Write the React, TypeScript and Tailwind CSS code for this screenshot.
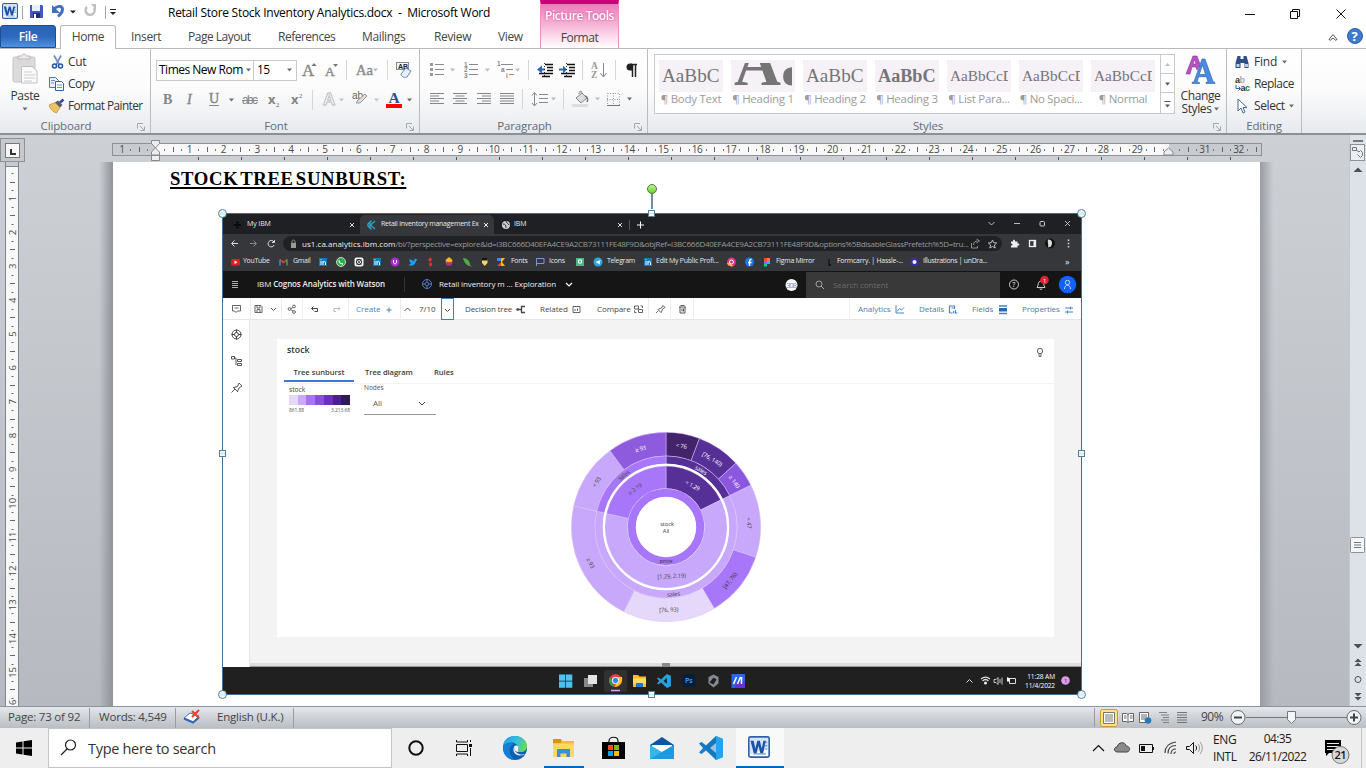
import React from "react";
import type { ReactNode } from "react";

const UI = "font-['Open_Sans','Noto_Sans',sans-serif]";

function Ic({ w, h = 20, children }: { w: number; h?: number; children?: ReactNode }) {
  return (
    <svg width={w} height={h} fill="none" className="shrink-0 overflow-visible">
      {children}
    </svg>
  );
}

function Drop({ x, y = 10, c = "#6b6b6b" }: { x: number; y?: number; c?: string }) {
  return <path d={`M${x} ${y - 1.5}h5l-2.500 3z`} fill={c} />;
}

function Sep({ x, h = 20 }: { x: number; h?: number }) {
  return <path d={`M${x + 0.5} 0V${h}`} stroke="#d3d6da" />;
}

function WordLogo({ size = 16 }: { size?: number }) {
  return (
    <svg width={size} height={size} viewBox="0 0 16 16" className="shrink-0">
      <rect x="0.6" y="0.6" width="14.8" height="14.8" rx="1.2" fill="#fff" stroke="#2f5ea8" strokeWidth="1.2" />
      <path d="M1.500 1.500h13v8l-13 4z" fill="#d5e4f7" />
      <path d="M12.500 4.500H14M12.500 7H14M12.500 9.500H14M4 13H13" stroke="#6d95cf" strokeWidth="0.8" />
      <path d="M1.800 3.500 4.200 12.500H6.200L7.600 7 9 12.500H11L13 3.500H11.200L10 9 8.600 3.500H6.800L5.300 9 4.100 3.500z" fill="#1d51a5" />
    </svg>
  );
}

function VsCode({ size }: { size: number }) {
  return (
    <svg width={size} height={size} viewBox="0 0 24 24" className="shrink-0">
      <path d="M17 0 24 3V21L17 24 7 14.500 2.500 18 0 16.500 4 12 0 7.500 2.500 6 7 9.500z" fill="#1780cf" />
      <path d="M17 0 24 3V21L17 24z" fill="#26a3f0" />
      <path d="M17 7v10L11 12z" fill="#eee" />
      <path d="M17 0 7 9.500 2.500 6 0 7.500 15 20.500 17 24" fill="#0c69ad" opacity="0.35" />
    </svg>
  );
}

function Handle({ className, round }: { className: string; round?: boolean }) {
  return (
    <i
      className={
        "absolute block border border-[#5b7c94] bg-gradient-to-b from-white via-[#c9eef5] to-white " +
        (round ? "size-[9px] rounded-full " : "size-[7px] ") +
        className
      }
    />
  );
}

function TitleArea() {
  return (
    <div className="flex h-12 shrink-0 bg-white">
      <div className="flex w-[540px] shrink-0 flex-col">
        <div className="flex h-6 items-center pl-0.5">
          <div className="flex w-[18px] pb-0.5"><WordLogo /></div>
          <Ic w={148} h={22}>
            <path d="M2.500 5v13M85.500 5v13" stroke="#a7a7a7" />
            <path d="M10 4h12l1 1v12H10z" fill="#4059bd" />
            <path d="M12 4h8v6h-8z" fill="#e9eefb" />
            <path d="M13 12h7v5h-7z" fill="#252f63" />
            <path d="M14 13h2v4h-2z" fill="#fff" />
            <path d="M34.500 7.500C38 4 43 5 42.500 9c-.3 2.500-2 4.500-4.500 6.500" stroke="#3f6fc4" strokeWidth="2.800" />
            <path d="M32 4v8h8z" fill="#3f6fc4" />
            <path d="M50 9.500h6l-3 3z" fill="#222" />
            <path d="M74 7a4.500 4.500 0 1 1-7-1" stroke="#bfbfbf" strokeWidth="2.500" />
            <path d="M71 3h5v6z" fill="#bfbfbf" />
            <path d="M90 8.500h6" stroke="#222" /><path d="M90 11h6l-3 3z" fill="#222" />
          </Ic>
          <span className="whitespace-pre pt-px text-[12px] tracking-[-0.27px] text-black">
            {"Retail Store Stock Inventory Analytics.docx  -  Microsoft Word"}
          </span>
        </div>
        <div className="flex h-6 items-center text-[12px] tracking-[-0.35px] text-[#444]">
          <div className="mt-px flex h-[23px] w-14 items-center justify-center rounded-t-[3px] border border-[#1b4f9c] bg-gradient-to-b from-[#2b63b5] via-[#2e68bd] to-[#4f93e0] font-semibold text-white">File</div>
          <div className="z-10 ml-1 mt-px flex h-6 w-14 items-center justify-center rounded-t-[3px] border border-b-0 border-[#b6babf] bg-white">Home</div>
          <div className="flex pt-0.5">
            <span className="ml-[15px] w-[57px]">Insert</span>
            <span className="w-[90px] tracking-[-0.5px]">Page Layout</span>
            <span className="w-[84px] tracking-[-0.5px]">References</span>
            <span className="w-[72px]">Mailings</span>
            <span className="w-16">Review</span>
            <span>View</span>
          </div>
        </div>
      </div>
      <div className="flex w-[79px] shrink-0 flex-col items-center border-x border-t-4 border-x-[#ee8fc4] border-t-[#c9007a] bg-gradient-to-b from-[#ec7ab9] via-[#f6b8d9] to-white text-[12px] tracking-[-0.45px]">
        <span className="mt-[3px] whitespace-nowrap font-semibold leading-[17px] text-white [text-shadow:0_0_2px_#c22a80]">Picture Tools</span>
        <span className="mt-[5px] leading-[17px] text-[#444]">Format</span>
      </div>
      <div className="flex flex-1 flex-col items-end">
        <Ic w={121} h={28}>
          <path d="M0 14.500h10M45.500 11.500h7v7h-7zM47.500 11.500v-2h7v7h-2M91.500 9.500l9 9M100.500 9.500l-9 9" stroke="#111" />
        </Ic>
        <Ic w={41} h={20}>
          <path d="M4 11.500 8 6.500l4 5-1.500.7L8 10l-2.500 2.200z" stroke="#555" fill="#fff" />
          <circle cx="30" cy="8" r="7.500" fill="#3d7bd1" stroke="#2a5fae" />
          <text x="26.500" y="13" fontSize="13" fontWeight="700" fill="#fff" fontFamily="Open Sans">?</text>
        </Ic>
      </div>
    </div>
  );
}

function Group({ label, className, launcher, children }: { label: string; className: string; launcher?: boolean; children: ReactNode }) {
  return (
    <div className={"flex shrink-0 flex-col border-r border-[#b9bdc2] " + className}>
      <div className="flex h-[69px] flex-col">{children}</div>
      <div className="flex h-4 items-center">
        <span className={"flex-1 pt-0.5 text-center text-[11.500px] tracking-[-0.15px] text-[#616c78] " + (launcher ? "pr-1" : "")}>{label}</span>
        {launcher && (
          <Ic w={14} h={16}>
            <path d="M1.500 11.500V6.500H7M4 9l4 4M8.500 9.500v4H4.500" stroke="#a3a7ad" />
          </Ic>
        )}
      </div>
    </div>
  );
}

function ClipboardGroup() {
  return (
    <Group label="Clipboard" launcher className="w-[151px]">
      <div className="flex flex-1 text-[12px] tracking-[-0.3px] text-[#333]">
        <div className="flex w-[50px] flex-col items-center pt-1">
          <Ic w={28} h={32}>
            <rect x="2" y="4" width="22" height="25" rx="2" fill="#dcdadb" stroke="#c6c4c5" />
            <path d="M7 6V3h4c0-2.500 4-2.500 4 0h4v3z" fill="#eee" stroke="#b8b6b7" />
            <path d="M10.500 13.500H21l5 4.500v12H10.500z" fill="#fafafa" stroke="#c0c0c0" />
            <path d="M13 19h8M13 22h11M13 25h11M13 28h8" stroke="#ccc" />
          </Ic>
          <span className="mt-[3px] leading-[16px]">Paste</span>
          <Ic w={28} h={10}><Drop x={11.5} y={5} /></Ic>
        </div>
        <div className="flex flex-col pl-px pt-0.5">
          <div className="flex h-[22px] items-center">
            <Ic w={17} h={16}>
              <path d="M3 1.500 8.500 11M10 1.500 5 11" stroke="#6d8fc0" strokeWidth="1.700" />
              <circle cx="3.500" cy="12" r="2" stroke="#2456a8" strokeWidth="1.600" />
              <circle cx="9.500" cy="12" r="2" stroke="#2456a8" strokeWidth="1.600" />
            </Ic>
            <span>Cut</span>
          </div>
          <div className="flex h-[22px] items-center">
            <Ic w={17} h={16}>
              <path d="M-1.500 1.500h6l3 3v7h-9z" fill="#eaf1fb" stroke="#4a74b8" />
              <path d="M4.500 5.500h6l2 2v7h-8z" fill="#fff" stroke="#34609f" />
              <path d="M0 4.500h4M0 7h3M6 9h5M6 11.500h5" stroke="#6d92cc" />
            </Ic>
            <span className="tracking-[-0.45px]">Copy</span>
          </div>
          <div className="flex h-[22px] items-center">
            <Ic w={17} h={16}>
              <path d="M-2 7 4 4.500 9 9.500 5.500 15C2 14-1 11-2 7z" fill="#eec463" stroke="#b98c3e" strokeWidth="0.700" />
              <path d="M4 4.500 7 2.500 11.500 7 9 9.500z" fill="#575c66" />
              <path d="M9 4.500 12.500 1.500" stroke="#3c3f99" strokeWidth="2.500" />
            </Ic>
            <span className="whitespace-nowrap text-[11.800px] tracking-[-0.55px]">Format Painter</span>
          </div>
        </div>
      </div>
    </Group>
  );
}

function FontGroup() {
  return (
    <Group label="Font" launcher className="w-[269px]">
      <div className="ml-[5px] mt-[11px] flex h-5 items-center">
        <div className="flex h-[21px] w-[98px] items-center border border-[#c6cacf] bg-white pl-0.5 text-[12px] tracking-[-0.5px] text-black">
          <span className="w-[86px] whitespace-nowrap">Times New Rom</span>
          <Ic w={8} h={20}><Drop x={1} /></Ic>
        </div>
        <div className="flex h-[21px] w-[43px] items-center border border-l-0 border-[#c6cacf] bg-white pl-[3px] text-[12px] tracking-[-0.5px] text-black">
          <span className="w-[28px]">15</span>
          <Ic w={8} h={20}><Drop x={2} /></Ic>
        </div>
        <Ic w={120}>
          <g fontFamily="Liberation Serif" fill="#8a8a8a" stroke="#8a8a8a" strokeWidth="0.400">
            <text x="5" y="16" fontSize="17">A</text>
            <text x="28" y="16" fontSize="13.500">A</text>
            <text x="59" y="15" fontSize="14.500">Aa</text>
          </g>
          <path d="M14.500 6h5l-2.500-3z" fill="#777" />
          <path d="M36 4h5l-2.500 3z" fill="#777" />
          <Sep x={49} />
          <Drop x={76} c="#b9b9b9" />
          <Sep x={90} />
          <rect x="99.500" y="2.500" width="12" height="7" fill="#f3f6fa" stroke="#7d8ca3" />
          <text x="101" y="9" fontSize="7" fontWeight="700" fill="#222" fontFamily="Liberation Sans">AB</text>
          <path d="M104 14l5-6 5 3-4 6c-2 1-6 0-6-3z" fill="#e9effa" stroke="#6c87b8" />
        </Ic>
      </div>
      <div className="ml-3 mt-2.5 flex h-5">
        <Ic w={250}>
          <g fontFamily="Liberation Serif" fontSize="14" fontWeight="700" fill="#858585">
            <text x="0" y="13.500">B</text>
            <text x="24" y="13.500" fontStyle="italic" fontWeight="400" stroke="#858585" strokeWidth="0.400">I</text>
            <text x="46" y="13" fontWeight="400" stroke="#858585" strokeWidth="0.400">U</text>
            <text x="79" y="13.500" fontSize="12" fontWeight="400" fontFamily="Liberation Sans" textLength="16">abc</text>
            <text x="105" y="13.500" fontFamily="Open Sans" fontSize="13">x</text>
            <text x="128" y="13.500" fontFamily="Open Sans" fontSize="13">x</text>
            <text x="113" y="17" fontSize="6.500">2</text>
            <text x="136" y="8" fontSize="6.500">2</text>
          </g>
          <path d="M46 15.500h10M79 10.500h16" stroke="#858585" />
          <Drop x={66} />
          <Sep x={149} />
          <text x="160" y="15" fontSize="17" fontWeight="700" fontFamily="Liberation Sans" fill="#fff" stroke="#bdbdbd">A</text>
          <Drop x={176} c="#c4c4c4" />
          <text x="189" y="9" fontSize="10" fontFamily="Liberation Sans" fill="#666">ab</text>
          <path d="M193 13h4l7-7-2-2-7 6z" fill="#ddd" stroke="#999" />
          <Drop x={211} c="#c4c4c4" />
          <text x="225.500" y="13" fontSize="15.500" fontWeight="700" fontFamily="Liberation Serif" fill="#31508c">A</text>
          <path d="M223 14h16v4h-16z" fill="#f00" />
          <Drop x={244} />
        </Ic>
      </div>
    </Group>
  );
}

function Lines({ x, color = "#858585", ws = [14, 9, 14, 9, 14], align = "l" }: { x: number; color?: string; ws?: number[]; align?: string }) {
  return (
    <path
      stroke={color}
      d={ws
        .map((w, i) => {
          const off = align === "l" ? 0 : align === "c" ? (14 - w) / 2 : 14 - w;
          return `M${x + off} ${4.5 + i * 2.5}h${w}`;
        })
        .join("")}
    />
  );
}

function ParagraphGroup() {
  return (
    <Group label="Paragraph" launcher className="w-[228px]">
      <div className="ml-2.5 mt-[11px] flex h-5">
        <Ic w={215}>
          <path d="M5 4.500h9M5 9.500h9M5 14.500h9M39 4.500h9M39 9.500h9M39 14.500h9M71 4.500h12M76 9.500h7M79 14.500h5" stroke="#8a8a8a" />
          <path d="M0 3h3v3H0zM0 8h3v3H0zM0 13h3v3H0z" fill="#999" />
          <g fontSize="6.500" fontFamily="Liberation Sans" fontWeight="700" fill="#888">
            <text x="34" y="7">1</text><text x="34" y="12">2</text><text x="34" y="17.500">3</text>
            <text x="67" y="6">1</text><text x="71" y="12">a</text><text x="76" y="18">i</text>
          </g>
          <Drop x={20} c="#bbb" /><Drop x={55} c="#bbb" /><Drop x={85} c="#bbb" />
          <Sep x={98} />
          <path d="M115 4.500h8M117 7.500h6M117 10.500h6M109 13.500h14M112 16.500h8" stroke="#111" strokeWidth="1.500" />
          <path d="M107 9.500l5-4v3h3v2h-3v3z" fill="#2e63c4" />
          <path d="M137 4.500h8M139 7.500h6M139 10.500h6M131 13.500h14M134 16.500h8" stroke="#111" strokeWidth="1.500" />
          <path d="M137 9.500l-4-4v3h-4v2h4v3z" fill="#2e63c4" />
          <path d="M114.500 3v15M136.500 3v15" stroke="#333" strokeDasharray="1 2" />
          <Sep x={152} />
          <g fontSize="9.500" fontFamily="Liberation Serif" fontWeight="700" fill="#9a9a9a">
            <text x="161" y="9">A</text><text x="161" y="18">Z</text>
          </g>
          <path d="M173.500 3v13M170.500 13l3 4 3-4" stroke="#888" />
          <Sep x={185} />
          <path d="M207 4.500h-6M202.500 4v13M205.500 4v13" stroke="#222" strokeWidth="1.500" />
          <path d="M202 3.500h-2a3.500 3.500 0 0 0 0 7h2z" fill="#222" />
        </Ic>
      </div>
      <div className="ml-2.5 mt-[9px] flex h-5">
        <Ic w={215}>
          <Lines x={0} />
          <Lines x={23} align="c" />
          <Lines x={47} align="r" />
          <Lines x={70} ws={[14, 14, 14, 14, 14]} />
          <Sep x={92} />
          <path d="M109 5.500h9M109 9.500h9M109 13.500h9M104.500 4v12M102 6.500l2.500-3 2.500 3M102 14l2.500 3 2.500-3" stroke="#8a8a8a" />
          <Drop x={121} c="#bbb" />
          <Sep x={133} />
          <path d="M146 9l6-5 5 5-6 5zM149 5c0-4 3-4 3 0" fill="#ddd" stroke="#888" />
          <path d="M155 7c3 1 3 4 2 6" stroke="#777" strokeWidth="1.500" />
          <path d="M142 15h16v3h-16z" fill="#ddd" />
          <Drop x={165} c="#bbb" />
          <path d="M177.500 4.500h12v12h-12zM183.500 4v13M177 10.500h13" stroke="#999" strokeDasharray="1 1.500" />
          <path d="M177 16.500h13" stroke="#777" />
          <Drop x={197} />
        </Ic>
      </div>
    </Group>
  );
}

const styleItems = [
  { s: "AaBbC", n: "Body Text", c: "text-[19.200px] leading-[26px]" },
  { s: "Aa", n: "Heading 1", c: "text-[65px] font-bold leading-[0px]" },
  { s: "AaBbC", n: "Heading 2", c: "text-[19.200px] leading-[26px]" },
  { s: "AaBbC", n: "Heading 3", c: "text-[18.200px] font-bold leading-[26px]" },
  { s: "AaBbCcD", n: "List Para...", c: "text-[15.300px] leading-[26px]" },
  { s: "AaBbCcD", n: "No Spaci...", c: "text-[15.300px] leading-[26px]" },
  { s: "AaBbCcD", n: "Normal", c: "text-[15.300px] leading-[26px]" },
];

function StylesGroup() {
  return (
    <Group label="Styles" launcher className="w-[579px]">
      <div className="flex">
        <div className="ml-1.5 mt-[5px] flex h-[60px] w-[521px] border border-[#c6cacf] bg-white">
          <div className="flex flex-1 gap-2 pl-1 pt-[5px]">
            {styleItems.map((it) => (
              <div key={it.n} className="flex w-16 shrink-0 flex-col">
                <div className="flex h-8 items-center overflow-hidden bg-[#f5f1f7] px-[3px]">
                  <div className={"h-[26px] w-[58px] overflow-hidden whitespace-nowrap font-['Liberation_Serif',serif] text-[#757575] " + it.c}>{it.s}</div>
                </div>
                <span className="flex justify-center whitespace-nowrap text-[11.500px] leading-[14px] tracking-[-0.28px] text-[#9b9b9b]">
                  ¶ {it.n}
                </span>
              </div>
            ))}
          </div>
          <div className="flex w-3.5 flex-col divide-y divide-[#c6cacf] border-l border-[#c6cacf]">
            <Ic w={13} h={19}><path d="M4 11h5l-2.500-3z" fill="#bbb" /></Ic>
            <Ic w={13} h={19}><Drop x={4} y={10} c="#555" /></Ic>
            <Ic w={13} h={19}><path d="M3.500 8.500h6" stroke="#555" /><Drop x={4} y={13} c="#555" /></Ic>
          </div>
        </div>
        <div className="flex w-[51px] flex-col items-center pt-[6px] text-[12px] leading-[13px] tracking-[-0.4px] text-[#333]">
          <svg width="30" height="34" className="shrink-0 overflow-visible">
            <path d="M0 19 7 1h4l3 8-3 6-1-3H6l-2 7zM7 9h3L8.500 4.500z" fill="#b455c0" stroke="#8a2f99" strokeWidth="0.600" />
            <path d="M6 28.500v-1l2-.8L16 4h3l8 22.500 2 1v1h-9v-1l2-.8-1.600-5H12.600L11 26.700l2.500.8v1zM13.300 19.500h6.200L16.500 10z" fill="#4d8be0" stroke="#235cb0" strokeWidth="0.600" />
          </svg>
          <span>Change</span>
          <span className="flex">Styles<Ic w={8} h={13}><Drop x={3} y={7} /></Ic></span>
        </div>
      </div>
    </Group>
  );
}

function EditingGroup() {
  return (
    <Group label="Editing" className="w-[75px]">
      <div className="flex flex-col pl-2 pt-0.5 text-[12px] tracking-[-0.4px] text-[#333]">
        <div className="flex h-[22px] items-center">
          <Ic w={19} h={16}>
            <path d="M2.500 2h3v3h3V2h3l2 7v5H9.500V9h-4v5H.5V9z" fill="#2d4f87" />
            <path d="M1.500 10h3v3h-3zM10 10h3v3h-3z" fill="#b9cdea" />
          </Ic>
          <span className="tracking-[-0.2px]">Find</span><Ic w={10} h={16}><Drop x={5} y={8} /></Ic>
        </div>
        <div className="flex h-[22px] items-center">
          <Ic w={19} h={16}>
            <g fontFamily="Liberation Sans" fontWeight="700" fontSize="9">
              <text x="0" y="7" fill="#333">a<tspan fill="#aaa">b</tspan></text>
              <text x="5.500" y="15" fill="#333">a<tspan fill="#0a8a1a">c</tspan></text>
            </g>
            <path d="M1 9v3.500h4M3.500 10.500l2 2-2 2" stroke="#345fae" />
          </Ic>
          <span className="tracking-[-0.55px]">Replace</span>
        </div>
        <div className="flex h-[22px] items-center">
          <Ic w={19} h={16}>
            <path d="M3 1v12l3-3 2 5 2-1-2-4.500h4z" fill="#fff" stroke="#486a98" />
          </Ic>
          <span>Select</span><Ic w={10} h={16}><Drop x={4} y={8} /></Ic>
        </div>
      </div>
    </Group>
  );
}

const Z0 = 43.7;
const PITCH = 33.84;

function HRuler() {
  const marks: ReactNode[] = [];
  for (let n = -1; n <= 32; n++) {
    const x = Z0 + n * PITCH;
    if (n !== 0 && n !== 30)
      marks.push(
        <text key={"t" + n} x={x} y="10.200" fontSize="10" letterSpacing="-0.300" textAnchor="middle" fill="#4a4a4a" fontFamily="Open Sans">
          {Math.abs(n)}
        </text>
      );
    if (x + 17 < 1149) marks.push(<path key={"h" + n} d={`M${Math.round(x + 17) + 0.5} 4v5`} stroke="#666" />);
    marks.push(
      <path
        key={"q" + n}
        d={`M${Math.round(x + 8.5) + 0.5} 6v2${x + 26 < 1149 ? `M${Math.round(x + 25.5) + 0.5} 6v2` : ""}`}
        stroke="#777"
      />
    );
  }
  return (
    <svg width="1150" height="20" className="overflow-visible">
      <rect x="0.500" y="0.500" width="1149" height="12" fill="#c8ccd1" stroke="#8d9299" />
      <rect x="44" y="1" width="1013" height="11" fill="#f8f8f8" />
      {marks}
      {Array.from({ length: 25 }, (_, i) => (
        <path key={i} d={`M${86.5 + i * 43} 14v3`} stroke="#555" />
      ))}
      <path d="M39.500-2.500h8v3l-4 4.500 4 4v3h-8v-3l4-4-4-4.500zM39.500 12.500h8v5h-8zM1056.500 5l4.500 4v3h-9v-3z" fill="#eee" stroke="#888" />
    </svg>
  );
}

function VRuler() {
  const marks: ReactNode[] = [];
  for (let n = 1; n <= 15; n++) {
    const y = 2.8 + n * PITCH;
    marks.push(
      <text key={"t" + n} transform={`translate(11 ${y}) rotate(-90)`} fontSize="9.500" textAnchor="middle" fill="#4a4a4a" fontFamily="Open Sans">
        {n}
      </text>
    );
  }
  for (let n = 1; n <= 16; n++) {
    const y = 2.8 + n * PITCH;
    marks.push(
      <path
        key={"l" + n}
        d={`M5 ${Math.round(y - 17) + 0.5}h5M6.500 ${Math.round(y - 8.5) + 0.5}h2M6.500 ${Math.round(y - 25.5) + 0.5}h2`}
        stroke="#666"
      />
    );
  }
  return (
    <svg width="14" height="544" className="overflow-hidden">
      <rect x="0.500" y="-2" width="13" height="560" fill="#c8ccd1" stroke="#7f868e" />
      <rect x="0.500" y="4.500" width="13" height="560" fill="#f8f8f8" stroke="#7f868e" />
      {marks}
      <text transform="translate(11 543) rotate(-90)" fontSize="9.500" textAnchor="middle" fill="#4a4a4a" fontFamily="Open Sans">16</text>
    </svg>
  );
}

function pt(r: number, a: number) {
  const t = (a * Math.PI) / 180;
  return `${(95 + r * Math.sin(t)).toFixed(2)} ${(95 - r * Math.cos(t)).toFixed(2)}`;
}

function Arc({ r0, r1, a0, a1, fill }: { r0: number; r1: number; a0: number; a1: number; fill: string }) {
  const big = a1 - a0 > 180 ? 1 : 0;
  return (
    <path
      d={`M${pt(r1, a0)}A${r1} ${r1} 0 ${big} 1 ${pt(r1, a1)}L${pt(r0, a1)}A${r0} ${r0} 0 ${big} 0 ${pt(r0, a0)}Z`}
      fill={fill}
      stroke="#d9c4fb"
      strokeWidth="0.500"
    />
  );
}

const outer: [number, number, string][] = [
  [0, 20.7, "#432369"],
  [20.7, 47.6, "#563096"],
  [47.6, 63.8, "#8b57de"],
  [63.8, 108.7, "#c8a8fb"],
  [108.7, 149.4, "#a876f8"],
  [149.4, 206.4, "#e5d8fa"],
  [206.4, 282.8, "#c8a8fb"],
  [282.8, 323.7, "#c8a8fb"],
  [323.7, 360, "#8e5ade"],
];

const burstText: [string, number, number, number, string][] = [
  ["< 76", 110.3, 14, 10, "#fff"],
  ["[76, 140)", 141, 27.2, 31, "#fff"],
  ["≥ 140", 163.3, 49.7, 54, "#fff"],
  ["sales", 130, 38.3, 30, "#fff"],
  ["< 1.29", 121.5, 53.5, 29, "#fff"],
  ["< 47", 178, 91, 86, "#444"],
  ["[47, 76)", 159, 148.7, -51, "#333"],
  ["[76, 93)", 97.7, 177.8, -2, "#444"],
  ["≥ 93", 19.5, 131, 64, "#444"],
  ["< 93", 25.5, 50, -57, "#444"],
  ["≥ 93", 69.5, 16.8, -15, "#fff"],
  ["sales", 52.9, 43.3, -37, "#444"],
  ["≥ 2.19", 64, 57, -36, "#444"],
  ["[1.29, 2.19)", 100.5, 144.2, -3, "#444"],
  ["sales", 102.5, 162.2, -5, "#444"],
  ["price", 95, 129, 0, "#333"],
  ["stock", 96, 92, 0, "#333"],
  ["All", 95, 99.2, 0, "#444"],
];

function Sunburst() {
  return (
    <svg width="190" height="190" viewBox="0 0 190 190" className="overflow-visible">
      {outer.map(([a0, a1, c]) => (
        <Arc key={a0} r0={71} r1={94.7} a0={a0} a1={a1} fill={c} />
      ))}
      <Arc r0={63} r1={71} a0={0} a1={63.8} fill="#563096" />
      <Arc r0={63} r1={71} a0={63.8} a1={282.8} fill="#c8a8fb" />
      <Arc r0={63} r1={71} a0={282.8} a1={360} fill="#a876f8" />
      <Arc r0={38.5} r1={61} a0={0} a1={63.8} fill="#563096" />
      <Arc r0={38.5} r1={61} a0={63.8} a1={282.8} fill="#c8a8fb" />
      <Arc r0={38.5} r1={61} a0={282.8} a1={360} fill="#a876f8" />
      <circle cx="95" cy="95" r="62.200" fill="none" stroke="#fff" strokeWidth="2" />
      <circle cx="95" cy="95" r="34.200" fill="none" stroke="#a876f8" strokeWidth="8" />
      {burstText.map(([s, x, y, a, c], i) => (
        <text key={i} transform={`translate(${x} ${y}) rotate(${a})`} dy="2" fontSize="5.800" letterSpacing="-0.100" textAnchor="middle" fill={c} fontFamily="Open Sans">
          {s}
        </text>
      ))}
    </svg>
  );
}

function BrowserTabs() {
  return (
    <div className="flex h-[21px] shrink-0 items-end bg-[#1e2023] text-[7px] font-medium tracking-[-0.1px] text-[#e8e8e8]">
      <div className="flex h-[19px] w-[138px] items-center pl-3">
        <Ic w={13} h={10}><path d="M0 5h7M2 2.500h3M2 7.500h3" stroke="#050505" strokeWidth="1.500" /></Ic>
        <span className="w-[103px]">My IBM</span>
        <Ic w={5} h={10}><path d="M0 3l4 4M4 3L0 7" stroke="#ddd" /></Ic>
      </div>
      <div className="flex h-[19px] w-[134px] items-center rounded-t-[5px] bg-[#36373b] pl-[7px]">
        <Ic w={14} h={10}><path d="M8 1 3.500 5 8 9M4.500 0.500 1 4v2l3.500 3.500M3 2v6" stroke="#2aa4c9" strokeWidth="1.400" /></Ic>
        <span className="w-[98px] overflow-hidden whitespace-nowrap tracking-[-0.26px]">Retail inventory management Exp</span>
        <Ic w={9} h={10}><path d="M5 3l4 4M9 3L5 7" stroke="#eee" /></Ic>
      </div>
      <div className="flex h-[19px] items-center pl-2">
        <Ic w={12} h={10}><circle cx="4" cy="5" r="4" fill="#ccc" /><path d="M1 4c2 0 3 1 3 4M4 1c0 2 2 2 3 4" stroke="#333" /></Ic>
        <span className="w-[103px]">IBM</span>
        <Ic w={11} h={10}><path d="M1 3l4 4M5 3L1 7" stroke="#ddd" /><path d="M12.500 0v10" stroke="#555" /></Ic>
        <Ic w={362} h={10}><path d="M9 5h7M12.500 1.500v7" stroke="#fff" /></Ic>
        <Ic w={85} h={10}>
          <path d="M-1.500 2 1.500 5 4.500 2M24 3.500h6M75 1l5 5M80 1l-5 5" stroke="#ccc" strokeWidth="0.900" />
          <rect x="50" y="1.500" width="4.500" height="4.500" rx="1" stroke="#ccc" />
        </Ic>
      </div>
    </div>
  );
}

function AddressBar() {
  return (
    <div className="flex h-[19px] shrink-0 items-center bg-[#36373b]">
      <Ic w={61} h={14}>
        <path d="M16 6.500H10M12.500 3.500 9.500 6.500l3 3" stroke="#ddd" />
        <path d="M28 6.500h6M31.500 3.500l3 3-3 3" stroke="#888" />
        <path d="M52 5a3.200 3.200 0 1 0 .2 3M52.500 3v2.500H50" stroke="#ddd" />
      </Ic>
      <div className="flex h-[15px] w-[719px] items-center rounded-full bg-[#202124] pl-[7px] text-[8px] tracking-[-0.3px] text-[#999]">
        <Ic w={12} h={12}><path d="M1 5h5v5H1z" fill="#999" /><path d="M2 5V3.500c0-2 3-2 3 0V5" stroke="#999" /></Ic>
        <span className="w-[670px] whitespace-nowrap">
          <b className="font-medium tracking-[0.03px] text-[#eee]">us1.ca.analytics.ibm.com</b>/bi/?perspective=explore&amp;id=i3BC666D40EFA4CE9A2CB73111FE48F9D&amp;objRef=i3BC666D40EFA4CE9A2CB73111FE48F9D&amp;options%5BdisableGlassPrefetch%5D=tru...
        </span>
        <Ic w={30} h={12}>
          <path d="M-.5 5v5h6V8M1.500 7c0-3 2-4 4-4M4.500 1l3 2-3 2" stroke="#aaa" strokeWidth="0.800" />
          <path d="M20.500 2l1.200 2.700 3 .3-2.300 2 .8 3-2.700-1.500L17.800 10l.8-3-2.300-2 3-.3z" stroke="#ccc" strokeWidth="0.900" />
        </Ic>
      </div>
      <Ic w={78} h={14}>
        <path d="M9 4.500h2c-.5-2.500 2.500-2.500 2 0h2.500v2c2.500-.5 2.500 2.500 0 2v2H9v-2c2 0 2-2 0-2z" fill="#eee" />
        <rect x="27.500" y="3.500" width="6" height="6" stroke="#eee" strokeWidth="1.300" /><path d="M31.500 3.500h2v6h-2z" fill="#eee" />
        <circle cx="48" cy="6.500" r="5" fill="#111" /><path d="M46 2.500c4 0 5 3 3 7l-3 1c1-3-1-5 0-8z" fill="#ddd" />
        <path d="M66.500 2.500V4M66.500 5.800v1.500M66.500 9v1.500" stroke="#ddd" strokeWidth="1.500" />
      </Ic>
    </div>
  );
}

function LinkedIn() {
  return (
    <>
      <rect x="0" y="1" width="8" height="8" fill="#1379b8" />
      <path d="M2 4v4M2 2.300v.9M4 8V4M4.200 5.500c.5-1.500 2.300-1.500 2.300.3V8" stroke="#fff" strokeWidth="1" />
    </>
  );
}

function Bookmarks() {
  return (
    <div className="flex h-[18px] shrink-0 items-center bg-[#36373b] pl-[9px] pb-px text-[6.900px] font-medium tracking-[-0.05px] text-[#e8e8e8]">
      <Ic w={12} h={10}><rect x="0" y="2" width="9" height="6.500" rx="1.500" fill="#e02020" /><path d="M3.500 3.500v3.500L6.500 5.200z" fill="#fff" /></Ic>
      <span className="w-[36px] tracking-[-0.25px]">YouTube</span>
      <Ic w={14} h={10}><path d="M1 8.500V2.500" stroke="#4285f4" strokeWidth="1.500" /><path d="M1 2.500 4.500 5.500 8 2.500" stroke="#ea4335" strokeWidth="1.500" /><path d="M8 8.500V2.500" stroke="#34a853" strokeWidth="1.500" /></Ic>
      <span className="w-[26px] tracking-[-0.25px]">Gmail</span>
      <Ic w={17} h={10}><LinkedIn /></Ic>
      <Ic w={19} h={10}><circle cx="5" cy="5" r="4.500" fill="#25b04a" stroke="#e8f5e9" strokeWidth="0.800" /><path d="M3 3.500c0 2 2 3.500 4 3.500" stroke="#fff" strokeWidth="1.300" /></Ic>
      <Ic w={18} h={10}><rect x="-0.500" y="0.500" width="9" height="9" rx="2" fill="#f4f4f4" /><circle cx="4" cy="5" r="2.600" stroke="#222" /><path d="M1.500 2l5 6M6.500 2l-5 6" stroke="#222" strokeWidth="0.700" /></Ic>
      <Ic w={18} h={10}><LinkedIn /></Ic>
      <Ic w={18} h={10}><circle cx="4" cy="5" r="4.500" fill="#a32bd0" /><path d="M2.500 3v2c0 2.500 3 2.500 3 0V3" stroke="#fff" /></Ic>
      <Ic w={18} h={10}><path d="M-.5 8c3 2 7 0 7.500-4l1.500-1.500-2.500-1L4.500 4 .5 2C0 4 1 5 2 6.500z" fill="#1d9bf0" /></Ic>
      <Ic w={18} h={10}><path d="M3.500 0 5 3 3 5l2.500 2-2 3L2 7.500 3 5 1 3z" fill="#e0342c" /></Ic>
      <Ic w={18} h={10}><circle cx="4" cy="5" r="3.500" fill="#c93a50" /><path d="M.5 3 4 0l3.500 3-1 2h-5z" fill="#f0b928" /><path d="M2.500 6v3M5.500 6v3" stroke="#8b2bc0" /></Ic>
      <Ic w={18} h={10}><path d="M0 1c4 0 7 3 7 7L9 9.500C4 9 1 6 0 1z" fill="#55a845" /></Ic>
      <Ic w={16} h={10}><path d="M1 2h5.500v4L3.700 9 1 6z" fill="#f3d36a" /><path d="M1 1h5.500v2.500H1z" fill="#171717" /></Ic>
      <Ic w={14} h={10}><path d="M0 1h4v3H0z" fill="#4285f4" /><path d="M4 1h4l-3 4 3 4H4z" fill="#fbbc04" /><path d="M0 9l4-4v4z" fill="#ea4335" /></Ic>
      <span className="w-[25px] tracking-[-0.2px]">Fonts</span>
      <Ic w={13} h={10}><path d="M.5 9V1.500H8v5H1" stroke="#7597dc" /></Ic>
      <span className="w-[27px] tracking-[-0.2px]">Icons</span>
      <Ic w={18} h={10}><rect x="0" y="1" width="8" height="8" fill="#49b98c" /><path d="M2.500 3h3v3h-3z" stroke="#fff" /></Ic>
      <Ic w={13} h={10}><circle cx="4" cy="5" r="4.500" fill="#2ca5e0" /><path d="M1.500 5l5-2-1 4.500-2-1.500z" fill="#fff" /></Ic>
      <span className="w-[37px] tracking-[-0.28px]">Telegram</span>
      <Ic w={12} h={10}><LinkedIn /></Ic>
      <span className="w-[71px] whitespace-nowrap tracking-[-0.2px]">Edit My Public Profi...</span>
      <Ic w={18} h={10}><circle cx="4.500" cy="5" r="4.500" fill="#df2e86" /><path d="M0 6c2-1 5 1 6 3.200C3 10 0 8 0 6z" fill="#fbad3c" /><circle cx="4.500" cy="5" r="2" stroke="#fff" /></Ic>
      <Ic w={18} h={10}><circle cx="4.500" cy="5" r="4.500" fill="#1778f2" /><path d="M6.500 2.500C4.500 2 4.500 3 4.500 9M3 5.500h3.500" stroke="#fff" strokeWidth="1.300" /></Ic>
      <Ic w={13} h={10}><path d="M1 1h3v3H1z" fill="#f24e1e" /><path d="M4 1h3v3H4z" fill="#ff7262" /><path d="M1 4h3v3H1z" fill="#a259ff" /><path d="M4 4h3v3H4z" fill="#1abcfe" /><path d="M1 7h3v2.500H1z" fill="#0acf83" /></Ic>
      <span className="w-[51px] whitespace-nowrap tracking-[-0.25px]">Figma Mirror</span>
      <Ic w={10} h={10}><path d="M2 2v6h2" stroke="#111" strokeWidth="1.300" /></Ic>
      <span className="w-[73px] whitespace-nowrap tracking-[-0.22px]">Formcarry. | Hassle-...</span>
      <Ic w={13} h={10}><circle cx="4.500" cy="5" r="4" fill="#3430a8" /><circle cx="4.500" cy="5" r="2" fill="#f0efff" /></Ic>
      <span className="w-[142px] whitespace-nowrap tracking-[-0.28px]">Illustrations | unDra...</span>
      <span className="text-[9px]">»</span>
    </div>
  );
}

function CognosHeader() {
  return (
    <div className="flex h-[27px] shrink-0 items-center bg-[#151515] text-[8px] text-[#eee]">
      <svg width="35" height="12" className="shrink-0" shapeRendering="crispEdges"><path d="M10 2h6v1h-6zM10 4h6v1h-6zM10 6h6v1h-6zM10 8h6v1h-6z" fill="#aaa" /></svg>
      <span className="w-[147px] whitespace-nowrap pb-px text-[8px] tracking-[-0.13px]">IBM <b className="font-semibold">Cognos Analytics with Watson</b></span>
      <Ic w={35} h={27}>
        <path d="M.5 6v15" stroke="#333" />
        <circle cx="23" cy="13" r="4.500" stroke="#5779c8" /><circle cx="23" cy="13" r="1.800" stroke="#5779c8" /><path d="M18 13h3M25 13h3M23 8v3M23 15v3" stroke="#5779c8" />
      </Ic>
      <span className="w-[126px] whitespace-nowrap pb-px font-medium tracking-[-0.11px]">Retail inventory m ... Exploration</span>
      <Ic w={241} h={14}>
        <path d="M1 5l3 3 3-3" stroke="#fff" strokeWidth="1.200" />
        <circle cx="226.500" cy="7" r="6" fill="#f7f9fb" />
        <text x="221" y="10" fontSize="8" fill="#829ab2" fontFamily="Liberation Sans" textLength="11">308</text>
      </Ic>
      <div className="flex h-[26px] w-[194px] items-center bg-[#393939] pl-2.5 text-[#6c6c6c]">
        <Ic w={17} h={12}><circle cx="3" cy="5" r="3" stroke="#aaa" strokeWidth="0.900" /><path d="M5 7l3 3" stroke="#aaa" /></Ic>
        <span className="tracking-[-0.05px]">Search content</span>
      </div>
      <Ic w={81} h={27}>
        <circle cx="14" cy="13.500" r="4.500" stroke="#ddd" strokeWidth="0.900" />
        <text x="12.200" y="16.200" fontSize="7" fill="#eee" fontFamily="Open Sans">?</text>
        <path d="M37 16.500l1-2c0-6 6-6 6 0l1 2zM40 17.500c0 1.500 2 1.500 2 0" stroke="#ddd" strokeWidth="0.900" />
        <circle cx="44.500" cy="9" r="4.300" fill="#da2430" />
        <text x="43" y="11.500" fontSize="6" fill="#fff" fontFamily="Open Sans">1</text>
        <circle cx="67.500" cy="13.500" r="8.700" fill="#1062fe" />
        <circle cx="67.500" cy="11.500" r="2.200" stroke="#c9dcff" /><path d="M64.500 18c0-5 6-5 6 0" stroke="#c9dcff" />
      </Ic>
    </div>
  );
}

function CognosToolbar() {
  return (
    <div className="flex h-[22px] shrink-0 items-center border-b border-[#e5e5e5] bg-white text-[8px] text-[#484848]">
      <Ic w={134} h={22}>
        <path d="M10.500 7.500h8v5.500h-3L14 14.500 12.500 13h-2zM12.500 10h4" stroke="#555" strokeWidth="0.900" />
        <path d="M28.500 0v22M59.500 0v22M80.500 0v22M126.500 0v22" stroke="#ededed" />
        <path d="M33 7.500h6l1 1v6h-7zM35 7.500V10h3V7.500M35 14v-2.500h3V14" stroke="#555" strokeWidth="0.900" />
        <path d="M49 10l2.500 2.500L54 10" stroke="#555" />
        <circle cx="67.500" cy="11" r="1.400" stroke="#555" strokeWidth="0.900" /><circle cx="72" cy="8.500" r="1.400" stroke="#555" strokeWidth="0.900" /><circle cx="72" cy="14" r="1.400" stroke="#555" strokeWidth="0.900" /><path d="M69 10.500l2-1M69 11.800l2 1.200" stroke="#555" strokeWidth="0.800" />
        <path d="M91.500 8.500 89.500 10.500 91.500 12.500M89.500 10.500h6v3h-3" stroke="#444" />
        <path d="M116 8.500l2 2-2 2M118 10.500h-6v3h2" stroke="#aaa" strokeWidth="0.800" />
      </Ic>
      <span className="w-[26px] text-[#4985bd]">Create</span>
      <Ic w={37} h={22}>
        <path d="M4.500 12h5M7 9.500v5" stroke="#4985bd" />
        <path d="M18.500 0v22" stroke="#ededed" />
        <path d="M22.500 13l3-3 3 3" stroke="#555" />
      </Ic>
      <span className="w-[18px] whitespace-nowrap">7/10</span>
      <Ic w={4} h={22} />
      <span className="flex h-[22px] w-[13px] items-center justify-center border border-[#3d7fb8]"><Ic w={7} h={8}><path d="M1 4l2.500 2.500L6 4" stroke="#444" /></Ic></span>
      <span className="ml-[11px] w-[50px] whitespace-nowrap tracking-[-0.13px]">Decision tree</span>
      <Ic w={25} h={22}><path d="M2 11.500h2M9 8.500H6.500v6H9M4 11.500h2M8 8.500h2M8 14.500h2" stroke="#444" strokeWidth="1.300" /><circle cx="2.500" cy="11.500" r="1.300" fill="#444" /></Ic>
      <span className="w-8 tracking-[-0.05px]">Related</span>
      <Ic w={25} h={22}><path d="M1 8.500h7v6H1zM3 13v-2M5.500 13V10.500" stroke="#555" strokeWidth="0.900" /></Ic>
      <span className="w-[37px] tracking-[-0.1px]">Compare</span>
      <Ic w={218} h={22}>
        <path d="M.5 8h4v3h-4zM4.500 11.500h4v3h-4zM6.500 8h2v2M.5 12.500v2h2" stroke="#555" strokeWidth="0.900" />
        <path d="M14.500 0v22M36.500 0v22M59.500 0v22M215.500 0v22" stroke="#ededed" />
        <path d="M22 15l2.500-2.500M23.500 11l4 4M24.500 11l3-1 1.500-2.500 2 2-2.500 1.500-1 3" stroke="#555" strokeWidth="0.900" />
        <path d="M45 9h7M46.500 7.500h4M46 9v6h5V9M48 10.500v3M49.500 10.500v3" stroke="#444" strokeWidth="0.900" />
      </Ic>
      <div className="flex items-center text-[#4d7ca8]">
        <span className="ml-1.5 w-[38px] whitespace-nowrap tracking-[-0.05px]">Analytics</span>
        <Ic w={23} h={22}><path d="M0 7.500v7.500h8M1 13.500l2.500-3 2 1.500L8 9.500" stroke="#4985bd" /></Ic>
        <span className="w-[30px] tracking-[-0.05px]">Details</span>
        <Ic w={23} h={22}><path d="M.5 15V8h5v3M.5 15h3M2.500 10h2M4.500 15v-2M6.500 15v-3M8.500 15h-3" stroke="#4985bd" strokeWidth="1.200" /></Ic>
        <span className="w-[26px]">Fields</span>
        <Ic w={24} h={22}><path d="M1 8h8M1 15.500h8" stroke="#4985bd" strokeWidth="1.300" /><path d="M1 10h8v3.500H1z" fill="#2468b8" /></Ic>
        <span className="w-[42px] tracking-[-0.1px]">Properties</span>
        <Ic w={10} h={22}><path d="M1 10h8M1 14h8M6.500 8.500v3M3.500 12.500v3" stroke="#4985bd" /></Ic>
      </div>
    </div>
  );
}

const legend = ["bg-[#e6d8fb]", "bg-[#c9a9fa]", "bg-[#a873f6]", "bg-[#8650dd]", "bg-[#6b2fc4]", "bg-[#4b2191]", "bg-[#31175c]"];

function CognosBody() {
  return (
    <div className="flex h-[347px] shrink-0">
      <div className="flex w-7 flex-col border-r border-[#e5e5e5] bg-white">
        <Ic w={27} h={347}>
          <circle cx="14.500" cy="14.500" r="4.500" stroke="#444" /><circle cx="14.500" cy="14.500" r="2" stroke="#444" /><path d="M9.500 14.500h3M16.500 14.500h3M14.500 9.500v3M14.500 16.500v3" stroke="#444" />
          <path d="M9.500 36.500h3v2.500h-3zM15.500 39.500h4v2h-4zM15.500 43.500h4v2h-4zM12.500 38h1.500v7" stroke="#444" strokeWidth="0.900" />
          <path d="M9.500 72.500 13 69M11 67l5 5M12 67.500l3.500-1 1.500-3.500 3 3-3 2-1.500 3.500" stroke="#444" strokeWidth="0.900" />
        </Ic>
      </div>
      <div className="flex flex-1 flex-col bg-[#f3f3f3] pl-[27px] pt-[19px]">
        <div className="flex h-[298px] w-[777px] flex-col bg-white">
          <div className="flex h-[23px] items-center justify-between pl-2.5 pr-[9px]">
            <span className="text-[8.800px] font-semibold text-[#333]">stock</span>
            <Ic w={10} h={14}><circle cx="5" cy="7" r="2.700" stroke="#555" strokeWidth="0.900" /><path d="M4 9.500v3h2v-3" stroke="#555" strokeWidth="0.900" /></Ic>
          </div>
          <div className="ml-[7px] mt-[2px] flex h-[20px] border-b border-[#f3f3f3] text-[7.600px] font-semibold leading-[17px] text-[#3d3d3d]">
            <span className="flex h-[18px] w-[70px] justify-center border-b-2 border-[#3b78d8]">Tree sunburst</span>
            <span className="ml-[11px] w-[69px] tracking-[-0.08px]">Tree diagram</span>
            <span className="tracking-[-0.05px]">Rules</span>
          </div>
          <div className="flex h-[34px] pl-3">
            <div className="flex w-[61px] flex-col text-[6.700px] leading-[9px] text-[#444]">
              <span className="mt-px pb-px">stock</span>
              <div className="flex h-[10px]">
                {legend.map((c) => <i key={c} className={"flex-1 " + c} />)}
              </div>
              <div className="flex justify-between pt-px text-[4.800px] leading-[8px] text-[#555]"><span>861.88</span><span>3,213.68</span></div>
            </div>
            <div className="ml-3.5 flex w-[72px] flex-col text-[6.500px] leading-[8px] text-[#555]">
              <span>Nodes</span>
              <div className="flex h-[23px] items-center justify-between border-b border-[#999] pl-[9px] pr-[10px] text-[8px]">
                <span>All</span>
                <Ic w={8} h={8}><path d="M1 3l3 3 3-3" stroke="#444" /></Ic>
              </div>
            </div>
          </div>
          <div className="ml-[294px] mt-[14px] h-[190px]"><Sunburst /></div>
        </div>
        <div className="-ml-[27px] mt-auto flex h-1 justify-center border-b border-[#999] bg-[#ddd]"><i className="h-1 w-2 bg-[#888]" /></div>
      </div>
    </div>
  );
}

function InnerTaskbar() {
  return (
    <div className="flex h-7 shrink-0 items-center bg-[#202020]">
      <Ic w={735} h={28}>
        <path d="M337 7.500h6.300v6.300H337zM344 7.500h6.300v6.300H344zM337 14.500h6.300v6.300H337zM344 14.500h6.300v6.300H344z" fill="#4cc2f1" />
        <path d="M362 11h9v9h-9z" fill="#888" /><path d="M366 8h9v9h-9z" fill="#e4e4e4" />
        <rect x="382" y="3" width="23" height="22" rx="2" fill="#303030" />
        <circle cx="393.500" cy="13.500" r="6.500" fill="#e2403a" />
        <path d="M388 10l4.500 9.800C387.500 19 386 14 388 10z" fill="#30a552" />
        <path d="M394 10h6c1 5-2 9.500-7.500 10l3.500-6z" fill="#f9c513" />
        <circle cx="393.500" cy="13.500" r="3.200" fill="#3f80ee" stroke="#fff" />
        <path d="M389 23.500h9" stroke="#d9a6e8" strokeWidth="1.500" />
        <path d="M411 8h5l1.500 1.500H424V20h-13z" fill="#f5bd2a" /><path d="M411 11.500h13V17h-13z" fill="#ffdc68" /><path d="M414 16h7v4h-7z" fill="#2377c8" />
        <g transform="translate(435 7) scale(.58)">
          <path d="M17 0 24 3V21L17 24 7 14.500 2.500 18 0 16.500 4 12 0 7.500 2.500 6 7 9.500z" fill="#28a1e3" />
          <path d="M17 7v10L11 12z" fill="#202020" />
        </g>
        <rect x="460.500" y="7" width="13" height="13" rx="2" fill="#061e3a" />
        <text x="463" y="15.500" fontSize="7" fontWeight="600" fill="#31a8ff" fontFamily="Open Sans">Ps</text>
        <path d="M491.500 7.500l5 2.500v6.500l-5 4-5-4V10z" fill="#858a91" /><path d="M491.500 10.500l3 2-3 5-4-2z" fill="#1d1f23" />
        <path d="M509.500 7h13.500v14h-13.500z" fill="#2e63ee" /><path d="M516 14.500h7V21h-11z" fill="#6333d8" />
        <path d="M511.500 17l3-7M515.500 17l3-7M519.500 10v7" stroke="#fff" strokeWidth="1.500" />
      </Ic>
      <Ic w={62} h={28}>
        <path d="M9.500 15.500l3-3 3 3" stroke="#ddd" />
        <path d="M24 12c3-2.500 6-2.500 9 0M25.500 14c2-2 4-2 6 0" stroke="#ddd" strokeWidth="1.200" /><circle cx="28.500" cy="16" r="1.500" fill="#eee" />
        <path d="M37 12.500h2l2-2v7l-2-2h-2zM43 12v4M45 10.500v7" stroke="#ddd" strokeWidth="0.900" />
        <path d="M52.500 11.500h6v5h-6z" stroke="#ddd" /><path d="M50 10l3 1.500-1 3h-2z" fill="#fff" />
      </Ic>
      <div className="flex w-[36px] flex-col items-end pb-px text-[6.600px] leading-[9px] text-white">
        <span className="whitespace-nowrap tracking-[-0.1px]">11:28 AM</span>
        <span className="tracking-[-0.15px]">11/4/2022</span>
      </div>
      <Ic w={20} h={28}><circle cx="10.500" cy="13.500" r="4.300" fill="#dc9ceb" /><text x="9" y="16" fontSize="6" fill="#333" fontFamily="Open Sans">1</text></Ic>
    </div>
  );
}

function Page() {
  return (
    <div className="h-[544px] w-[1147px] shrink-0 bg-white pl-[57px] pt-1">
      <h1 className="h-[25px] whitespace-nowrap font-['Liberation_Serif',serif] text-[18.700px] font-bold leading-[25px] tracking-[0.66px] text-black underline decoration-2 underline-offset-2 [word-spacing:-3.200px]">STOCK TREE SUNBURST:</h1>
      <div className="relative ml-[52px] mt-[22px] h-[482px] w-[860px]">
        <div className="flex h-full w-full flex-col overflow-hidden">
          <BrowserTabs />
          <AddressBar />
          <Bookmarks />
          <CognosHeader />
          <CognosToolbar />
          <CognosBody />
          <InnerTaskbar />
        </div>
        <i className="pointer-events-none absolute inset-0 border border-[#426c99]" />
        <i className="absolute left-[429px] top-[-20px] h-4 w-[2px] bg-[#6c8ca8]" />
        <i className="absolute left-[425px] top-[-29px] size-[10px] rounded-full border border-[#55733c] bg-gradient-to-b from-[#b9f587] to-[#6bd226]" />
        <Handle round className="left-[-4px] top-[-4px]" />
        <Handle round className="right-[-4px] top-[-4px]" />
        <Handle round className="bottom-[-4px] left-[-4px]" />
        <Handle round className="bottom-[-4px] right-[-4px]" />
        <Handle className="left-[426px] top-[-3px]" />
        <Handle className="bottom-[-3px] left-[426px]" />
        <Handle className="left-[-3px] top-[237px]" />
        <Handle className="right-[-3px] top-[237px]" />
      </div>
    </div>
  );
}

function DocumentArea() {
  return (
    <div className="flex h-[571px] shrink-0 overflow-hidden bg-gradient-to-b from-[#cdd1d6] to-[#b6bac0]">
      <div className="flex w-[1349px] flex-col">
        <div className="flex h-[27px] shrink-0">
          <div className="mt-[3px] flex h-6 w-[25px] shrink-0 items-center justify-center border border-[#8d9299] bg-[#c5c9ce]">
            <Ic w={15} h={15}><rect x="0.500" y="0.500" width="14" height="14" fill="#f7f7f7" stroke="#777" /><path d="M6 6v5h5" stroke="#333" strokeWidth="2" /></Ic>
          </div>
          <div className="ml-[87px] mt-2"><HRuler /></div>
        </div>
        <div className="flex">
          <div className="flex w-[5px] shrink-0" />
          <VRuler />
          <div className="w-[94px] shrink-0 bg-gradient-to-r from-transparent from-85% to-[#8f9399]" />
          <Page />
          <div className="flex-1 bg-gradient-to-r from-[#989ca2] to-transparent to-15%" />
        </div>
      </div>
      <div className="flex w-[17px] flex-col border-l border-[#c3c8cf] bg-[#dde2e9]">
        <Ic w={16} h={571}>
          <path d="M3 6h10" stroke="#777" strokeWidth="2" />
          <rect x="0.500" y="9.500" width="14" height="16" fill="#eceef1" stroke="#8d9299" />
          <path d="M2.500 12.500h4v3h-4zM6 15l3 2 1.500-1.500 2 2v3l-2 2-3-3" stroke="#777" />
          <path d="M3.500 37h9L8 32.500z" fill="#4b4f56" />
          <rect x="0.500" y="402.500" width="14" height="15" rx="1" fill="#f5f6f8" stroke="#8d9299" />
          <path d="M4 407.500h7M4 410h7M4 412.500h7" stroke="#777" />
          <path d="M3.500 509h9L8 513.500z" fill="#4b4f56" />
          <path d="M8 523.500l3.500 3.500h-7zM8 527.500l3.500 3.500h-7z" fill="#4b4f56" />
          <circle cx="8" cy="544.500" r="3" stroke="#4b4f56" />
          <path d="M4.500 558h7L8 561.500zM4.500 562h7L8 565.500z" fill="#4b4f56" />
        </Ic>
      </div>
    </div>
  );
}

function StatusBar() {
  return (
    <div className="flex h-[22px] shrink-0 items-center border-t border-[#8b9299] bg-gradient-to-b from-[#e4e7eb] to-[#b9bec4] text-[11.500px] tracking-[-0.2px] text-[#444]">
      <span className="flex h-5 w-[90px] items-center border-r border-[#989da3] pb-px pl-2">Page: 73 of 92</span>
      <span className="flex h-5 w-[86px] items-center border-r border-[#989da3] pb-px pl-[9px]">Words: 4,549</span>
      <span className="flex h-5 w-[118px] items-center border-r border-[#989da3] pb-px pl-2">
        <Ic w={33} h={18}>
          <path d="M0 10l6-5 9 3-6 6z" fill="#fff" stroke="#4671b5" /><path d="M0 10.500l9 4 6-5" stroke="#3567b5" strokeWidth="2" />
          <path d="M8 3l7 7M15 2 8 9" stroke="#e8412a" strokeWidth="2" />
        </Ic>
        English (U.K.)
      </span>
      <div className="ml-auto flex items-center">
        <Ic w={107} h={22}>
          <path d="M.5 1v19" stroke="#989da3" />
          <rect x="6.500" y="2.500" width="17" height="17" rx="2" fill="#ffe38b" stroke="#c99a2e" />
          <path d="M9.500 5.500h11v11h-11zM11 8h8M11 10h8M11 12h8M11 14h8" stroke="#666" fill="#fff" strokeWidth="0.900" />
          <path d="M28.500 6.500h4l1.500 1 1.500-1h4v8h-4l-1.500 1-1.500-1h-4zM34 7v8M30 9h2.500M30 11h2.500M36 9h2.500M36 11h2.500" stroke="#555" fill="#fff" strokeWidth="0.900" />
          <path d="M45.500 5.500h9v10h-9zM47 8h6M47 10h6M47 12h4" stroke="#666" fill="#fff" /><circle cx="54" cy="13.500" r="3.300" fill="#2d78b8" />
          <path d="M65 5.500h8M67 8h8M69 10.500h6M67 13h8M69 15.500h6" stroke="#777" strokeWidth="0.900" />
          <path d="M83 5.500h10M83 8h10M83 10.500h10M83 13h10M83 15.500h10" stroke="#666" strokeWidth="0.900" />
        </Ic>
        <span className="w-[29px] pb-px text-[12px] tracking-[-0.5px]">90%</span>
        <Ic w={136} h={22}>
          <path d="M16 10.500h102" stroke="#71777e" />
          <circle cx="8" cy="10.500" r="7" fill="#f0f2f4" stroke="#666c73" /><path d="M4 10.500h8" stroke="#444" strokeWidth="2" />
          <circle cx="124" cy="10.500" r="7" fill="#f0f2f4" stroke="#666c73" /><path d="M120 10.500h8M124 6.500v8" stroke="#444" strokeWidth="2" />
          <path d="M57.500 4.500h8v8l-4 4-4-4z" fill="#f5f6f7" stroke="#71777e" />
        </Ic>
      </div>
    </div>
  );
}

function Taskbar() {
  return (
    <div className="flex h-10 shrink-0 bg-[#eeeeee] text-[#1b1b1b]">
      <Ic w={48} h={40}><path d="M16 14.500l6.500-1v6H16zM23.500 13.300 32 12v7.500h-8.500zM16 20.500h6.500v6l-6.500-1zM23.500 20.500H32V28l-8.500-1.300z" fill="#000" /></Ic>
      <div className="flex w-[344px] items-center border border-[#c4c4c4] bg-white pl-[11px] text-[14.500px] tracking-[-0.3px] text-[#333]">
        <Ic w={28} h={38}><circle cx="10.500" cy="16" r="5" stroke="#222" strokeWidth="1.200" /><path d="M7 20l-6 6" stroke="#222" strokeWidth="1.200" /></Ic>
        <span className="pt-0.5">Type here to search</span>
      </div>
      <Ic w={98} h={40}>
        <circle cx="24" cy="20" r="6.700" stroke="#111" strokeWidth="2" />
        <path d="M64.500 16.500h11v7h-11zM64.500 12v2h11v-2M64.500 28v-2h11v2M78.500 12v2M78.500 20v8" stroke="#111" /><path d="M77 16h3v3h-3z" fill="#111" />
      </Ic>
      <div className="flex w-[49px] items-center justify-center">
        <svg width="24" height="24" viewBox="0 0 24 24">
          <defs>
            <linearGradient id="edgeTop" x1="0" x2="1" y1="0.300" y2="0.600"><stop stopColor="#1f9fe8" /><stop offset="0.550" stopColor="#35c1d9" /><stop offset="1" stopColor="#6bdc4c" /></linearGradient>
          </defs>
          <circle cx="12" cy="12" r="12" fill="#0b5fb0" />
          <path d="M0 10C1 3 6 0 12 0c7 0 12 5 12 10 0 4-3 6-6 6-4 0-3-2-2.500-3.500C15.500 9 12 6.500 8 6.500 4 6.500 1 9 0 10z" fill="url(#edgeTop)" />
          <path d="M0 10c2-3 7-4 11-2C8 9 6 12 6.500 15.500 7 20 10 23 13 24 5 24 0 19 0 10z" fill="#1280d8" />
          <path d="M11 11c-2 4 1 8.500 6 8.500 2.500 0 4.500-.7 6-2-2 1-4 1.500-7 .5-3-1-5-3.500-5-7z" fill="#eee" />
          <path d="M11 11c1-2 4-2 4.500.5 0 2-1.500 3 .5 4.500-3 0-5-2-5-5z" fill="#f4f4f4" />
        </svg>
      </div>
      <div className="flex w-[49px] flex-col items-center">
        <Ic w={40} h={38}>
          <path d="M9 11h8l2 2h11v16H9z" fill="#f6ba33" /><path d="M9 11h8v4H9z" fill="#d89215" /><path d="M9 15.500h21V29H9z" fill="#ffd766" />
          <path d="M13 21h13v8h-3.500v-3.500h-6V29H13z" fill="#3a8fdb" />
        </Ic>
        <i className="h-[2px] w-10 bg-[#0067b8]" />
      </div>
      <div className="flex w-[49px] items-center justify-center">
        <Ic w={24} h={26}>
          <path d="M1 7h23v17H1z" fill="#000" /><path d="M8 8V6c0-5 9-5 9 0v2" stroke="#111" strokeWidth="1.200" />
          <path d="M7 10h5v5H7z" fill="#f25022" /><path d="M13 10h5v5h-5z" fill="#7fba00" /><path d="M7 16h5v5H7z" fill="#00a4ef" /><path d="M13 16h5v5h-5z" fill="#ffb900" />
        </Ic>
      </div>
      <div className="flex w-[49px] items-center justify-center">
        <Ic w={24} h={24}><path d="M0 9 12 1l12 8v14H0z" fill="#0b57a6" /><path d="M2 9h20v9H2z" fill="#fff" /><path d="M0 9l12 7 12-7v14H0z" fill="#34b5ec" /><path d="M0 23 24 9v14z" fill="#1c9ae4" /></Ic>
      </div>
      <div className="flex w-[50px] items-center justify-center"><VsCode size={24} /></div>
      <div className="flex w-12 flex-col items-center bg-[#f9f9f9]">
        <div className="flex h-[38px] items-center pr-0.5"><WordLogo size={22} /></div>
        <i className="h-[2px] w-12 bg-[#0067b8]" />
      </div>
      <div className="ml-auto flex">
        <Ic w={121} h={40}>
          <path d="M2 23l5.500-5.500L13 23" stroke="#111" strokeWidth="1.200" />
          <path d="M26 24c-4-1-3-5 0-5 1-5 8-6 9-1 4 0 5 5 1 6z" fill="#8a8a8a" stroke="#444" />
          <path d="M48.500 16.500h13v8h-13zM62.500 19v3" stroke="#111" /><path d="M50 18h4v5h-4z" fill="#111" />
          <path d="M74 25c0-6 4-10 11-11M77 25.500c0-5 3-8 8-8M80 26c0-3 2-5 5-5M83 26c0-1 1-2 2-2" stroke="#444" strokeWidth="1.200" />
          <path d="M95.500 18.500h3l4-4v11l-4-4h-3zM104.500 17.500c1.500 1 1.500 4 0 5" stroke="#111" /><path d="M107 16c2 2 2 6 0 8M109 14c3 3 3 9 0 12" stroke="#999" />
        </Ic>
        <div className="flex w-[28px] flex-col items-start pl-px pt-[3px] text-[12px] leading-[17px] tracking-[-0.4px]"><span>ENG</span><span>INTL</span></div>
        <div className="ml-[7px] flex w-[61px] flex-col items-center whitespace-nowrap pt-[2px] text-[12px] leading-[17.500px] tracking-[-0.6px]"><span>04:35</span><span>26/11/2022</span></div>
        <Ic w={58} h={40}>
          <path d="M17 12h16v13H21l-3 3v-3h-1z" fill="#000" /><path d="M19 15.500h12M19 18.500h12M19 21.500h8" stroke="#eee" />
          <circle cx="32.500" cy="27" r="8.500" fill="#d8d8d8" stroke="#777" />
          <text x="26.500" y="31" fontSize="11" fontWeight="600" fill="#111" fontFamily="Open Sans" textLength="12">21</text>
          <path d="M53.500 0v40" stroke="#c4c4c4" />
        </Ic>
      </div>
    </div>
  );
}

export default function App() {
  return (
    <div className={"flex h-[768px] w-[1366px] flex-col overflow-hidden bg-white " + UI}>
      <TitleArea />
      <div className="flex h-[87px] shrink-0 border-b-2 border-t border-b-[#8b9098] border-t-[#b6babf] bg-gradient-to-b from-white via-[#fbfbfc] to-[#e7eaee]">
        <ClipboardGroup />
        <FontGroup />
        <ParagraphGroup />
        <StylesGroup />
        <EditingGroup />
      </div>
      <DocumentArea />
      <StatusBar />
      <Taskbar />
    </div>
  );
}
